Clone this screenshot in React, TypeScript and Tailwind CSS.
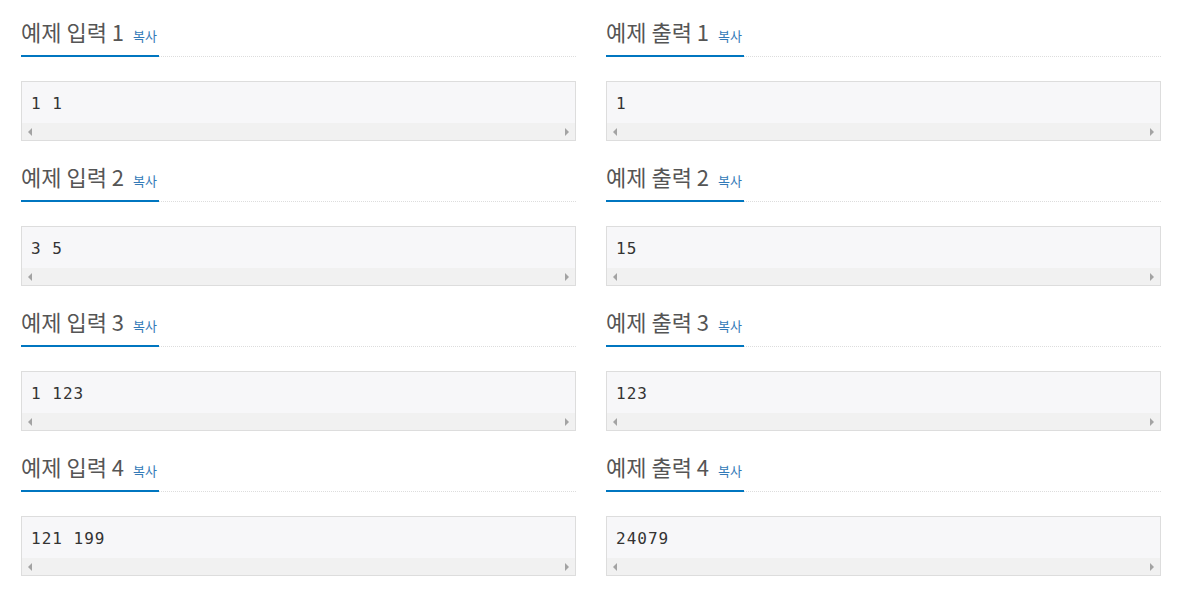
import React from "react";

const samples = [
  { n: 1, input: "1 1", output: "1" },
  { n: 2, input: "3 5", output: "15" },
  { n: 3, input: "1 123", output: "123" },
  { n: 4, input: "121 199", output: "24079" },
];

function SampleBlock({ title, n, data }: { title: string; n: number; data: string }) {
  return (
    <section className="mb-[24px]">
      {/* heading with blue underline over a dotted rule */}
      <div className="flex border-b border-dotted border-[#dddddd]">
        <h2 className="-mb-px flex h-[37px] items-baseline border-b-2 border-[#0076c0] pr-[2px] pb-[13px] text-[22px] leading-[22px] font-normal text-[#555]">
          {title} {n}
          <span className="ml-[9px] text-[13px] leading-none text-[#337ab7]">복사</span>
        </h2>
      </div>
      <div className="mt-[24px] border border-[#dddddd] bg-[#f7f7f9]">
        <pre
          className="px-[9px] pt-[11px] pb-[8px] text-[16px] leading-[22px] tracking-[1px] text-[#333]"
          style={{ fontFamily: '"DejaVu Sans Mono", "Liberation Mono", monospace' }}
        >
          {data}
        </pre>
        <div className="flex h-[17px] items-center justify-between bg-[#f1f1f1] px-[6px]">
          <span className="h-0 w-0 border-y-[4px] border-r-[4px] border-y-transparent border-r-[#a3a3a3]" />
          <span className="h-0 w-0 border-y-[4px] border-l-[4px] border-y-transparent border-l-[#a3a3a3]" />
        </div>
      </div>
    </section>
  );
}

export default function App() {
  return (
    <div
      className="min-h-[594px] bg-white pl-[21px] pt-[20px]"
      style={{ fontFamily: '"Noto Sans CJK KR", "Noto Sans", sans-serif' }}
    >
      <div className="grid grid-cols-[555px_555px] gap-x-[30px]">
        {samples.map((s) => (
          <React.Fragment key={s.n}>
            <SampleBlock title="예제 입력" n={s.n} data={s.input} />
            <SampleBlock title="예제 출력" n={s.n} data={s.output} />
          </React.Fragment>
        ))}
      </div>
    </div>
  );
}
